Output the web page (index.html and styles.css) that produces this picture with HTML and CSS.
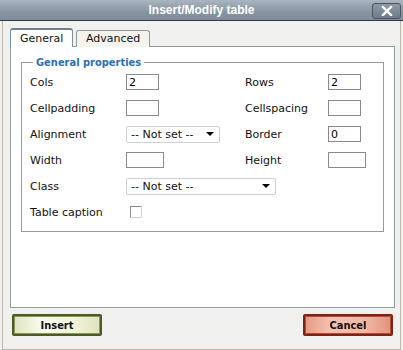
FILE: index.html
```html
<!DOCTYPE html>
<html lang="en">
<head>
  <meta charset="UTF-8">
  <title>Insert/Modify table</title>
  <link rel="stylesheet" href="styles.css">
</head>
<body>

  <div class="window">
    <div class="titlebar">
      <span></span>
      <div class="title">Insert/Modify table</div>
      <button class="close-btn">
        <svg width="12" height="10" viewBox="0 0 12 10">
          <path d="M2 1 L10 9 M10 1 L2 9" stroke="#fff" stroke-width="2.4" stroke-linecap="square"/>
        </svg>
      </button>
    </div>

    <div class="frame">
      <div class="tabs">
        <div class="tab active">General</div>
        <div class="tab">Advanced</div>
      </div>

      <div class="panel">
        <fieldset class="props">
          <legend>General properties</legend>
          <div class="form-grid">
            <label>Cols</label>
            <input class="field" type="text" value="2">
            <label>Rows</label>
            <input class="field" type="text" value="2">

            <label>Cellpadding</label>
            <input class="field" type="text">
            <label>Cellspacing</label>
            <input class="field" type="text">

            <label>Alignment</label>
            <div class="select small">
              <span>-- Not set --</span>
              <span class="arrow"></span>
            </div>
            <label>Border</label>
            <input class="field" type="text" value="0">

            <label>Width</label>
            <input class="field wide" type="text">
            <label>Height</label>
            <input class="field wide" type="text">

            <label>Class</label>
            <div class="select large">
              <span>-- Not set --</span>
              <span class="arrow"></span>
            </div>

            <label>Table caption</label>
            <span class="checkbox"></span>
          </div>
        </fieldset>
      </div>

      <div class="actions">
        <button class="btn insert">Insert</button>
        <button class="btn cancel">Cancel</button>
      </div>
    </div>
  </div>

</body>
</html>
```

FILE: styles.css
```css
* {
  box-sizing: border-box;
  margin: 0;
  padding: 0;
}

body {
  background: #f0f0ee;
  font-family: "DejaVu Sans", Verdana, sans-serif;
  font-size: 11px;
  color: #111;
}

.window {
  width: 403px;
  height: 350px;
  display: flex;
  flex-direction: column;
}

.titlebar {
  height: 21px;
  display: grid;
  grid-template-columns: 1fr auto 1fr;
  align-items: center;
  background: linear-gradient(#a9b5bf, #8795a2 60%, #7f8d9a);
  border-bottom: 1px solid #2f3a44;
}

.title {
  font-family: "Liberation Sans", Arial, sans-serif;
  font-weight: bold;
  font-size: 12px;
  color: #fff;
}

.close-btn {
  justify-self: end;
  width: 29px;
  height: 16px;
  margin-right: 2px;
  margin-top: 1px;
  border: 1px solid #4b5661;
  border-radius: 3px;
  background: linear-gradient(#8e9aa5, #6e7b87);
  display: flex;
  align-items: center;
  justify-content: center;
}

.frame {
  flex: 1;
  margin: 0 2px;
  border-left: 1px solid #bcb7aa;
  border-right: 1px solid #bcb7aa;
  border-bottom: 1px solid #bcb7aa;
  padding: 8px 5px 0 7px;
  display: flex;
  flex-direction: column;
}

/* tabs */
.tabs {
  display: flex;
  align-items: flex-end;
  gap: 3px;
  height: 18px;
  position: relative;
  z-index: 2;
}

.tab {
  height: 17px;
  padding: 0 9px;
  border: 1px solid #919b9c;
  border-bottom: none;
  border-radius: 3px 3px 0 0;
  background: #f4f3ee;
  line-height: 16px;
}

.tab.active {
  height: 19px;
  width: 63px;
  background: #fff;
  border-color: #7c8d9b;
  border-top: 2px solid #6c8191;
  line-height: 17px;
}

.panel {
  height: 262px;
  margin-top: -1px;
  background: #fff;
  border: 1px solid #919b9c;
  padding: 9px 10px 0 10px;
}

/* fieldset */
.props {
  border: 1px solid #9a9a9a;
  padding: 0 0 6px 8px;
}

.props legend {
  margin-left: 3px;
  padding: 0 3px;
  color: #2b6fb6;
  font-family: "DejaVu Sans Condensed", "DejaVu Sans", sans-serif;
  font-weight: bold;
  line-height: 13px;
}

.form-grid {
  display: grid;
  grid-template-columns: 96px 119px 83px auto;
  grid-auto-rows: 26px;
  align-items: center;
}

.field {
  width: 33px;
  height: 16px;
  border: 1px solid #8a8a8a;
  font-family: inherit;
  font-size: 11px;
  padding: 0 2px;
  outline: none;
}

.field.wide {
  width: 38px;
}

.select {
  height: 17px;
  border: 1px solid #cfcfcf;
  border-radius: 2px;
  display: flex;
  align-items: center;
  justify-content: space-between;
  padding: 0 4px;
}

.select.small {
  width: 94px;
}

.select.large {
  width: 150px;
  grid-column: 2 / 5;
}

.arrow {
  width: 0;
  height: 0;
  border-left: 4px solid transparent;
  border-right: 4px solid transparent;
  border-top: 4px solid #000;
  margin-right: 1px;
}

.checkbox {
  width: 12px;
  height: 12px;
  margin-left: 4px;
  border: 1px solid #8e8e8e;
  border-right-color: #d4d4d4;
  border-bottom-color: #d4d4d4;
}

/* buttons */
.actions {
  display: flex;
  justify-content: space-between;
  padding: 6px 2px 0 2px;
}

.btn {
  width: 90px;
  height: 22px;
  font-family: "DejaVu Sans Condensed", "DejaVu Sans", sans-serif;
  font-size: 11px;
  font-weight: bold;
  color: #111;
  border-radius: 2px;
}

.btn.insert {
  border: 2px solid #4b5a26;
  background: linear-gradient(90deg, #dfe3c1, #f8f9ea 30%, #f3f4dc 70%, #dfe2bf);
  box-shadow: inset 0 0 0 1px #8a9656;
}

.btn.cancel {
  border: 2px solid #7d2414;
  background: linear-gradient(90deg, #e69a85, #f5c2b2 30%, #f2b7a5 70%, #e2937e);
  box-shadow: inset 0 0 0 1px #b04a35;
}
```
